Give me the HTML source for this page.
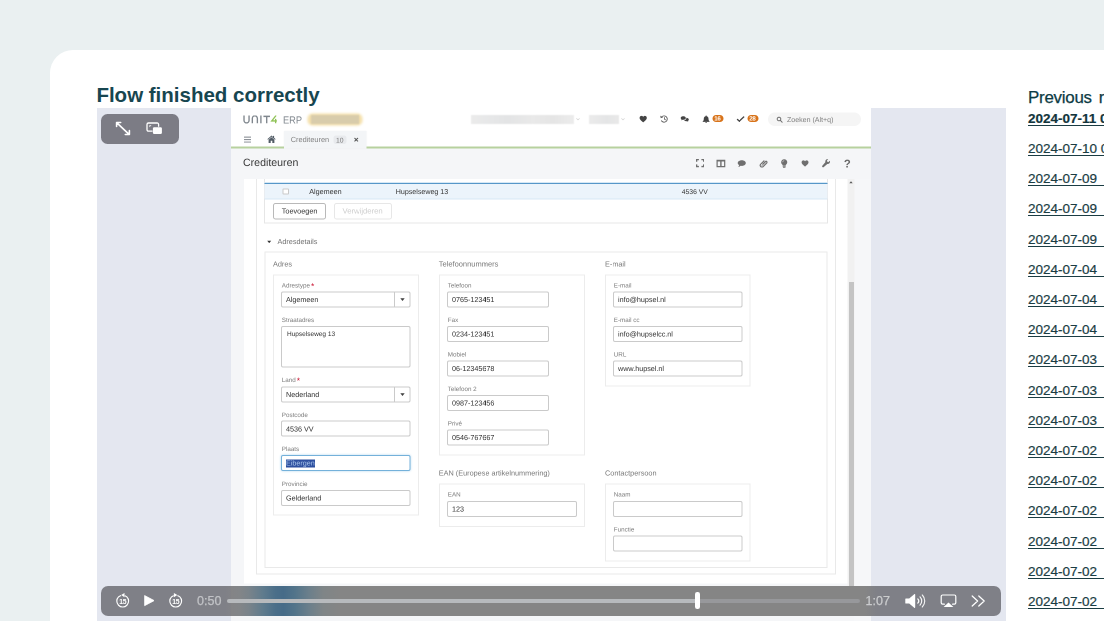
<!DOCTYPE html>
<html>
<head>
<meta charset="utf-8">
<title>Flow finished correctly</title>
<style>
*{box-sizing:border-box;margin:0;padding:0}
html,body{width:1104px;height:621px;overflow:hidden}
body{background:#eaf0f1;font-family:"Liberation Sans",sans-serif;position:relative}
.abs{position:absolute}
#card{position:absolute;left:50px;top:50px;width:1100px;height:600px;background:#fff;border-top-left-radius:23px}
#h1{position:absolute;left:96.400px;top:82.200px;font-size:20.500px;font-weight:bold;color:#174650;white-space:nowrap;line-height:26px;letter-spacing:0}
#vidbg{position:absolute;left:96.5px;top:108.400px;width:909px;height:520px;background:#e4e7f0}
#vid{position:absolute;left:231px;top:108px;width:640px;height:513px;overflow:hidden;background:#fff}
#v2{text-rendering:geometricPrecision;position:absolute;left:0;top:0;width:1280px;height:1026px;transform:scale(.5);transform-origin:0 0;will-change:transform;font-family:"Liberation Sans",sans-serif;color:#3a3a3a;background:#f5f6f8}
#v2 .a{position:absolute;white-space:nowrap}
/* side list */
#side{position:absolute;left:1028px;top:0;width:120px;color:#12343b;white-space:nowrap}
#side .t{position:absolute;left:0;top:86.600px;font-size:16.900px;letter-spacing:-.25px;word-spacing:2.600px;line-height:22px;color:#0d3b44;-webkit-text-stroke:.25px #0d3b44}
#side a{position:absolute;left:0;font-size:13.5px;line-height:18px;color:#1a3c43;text-decoration:underline;text-underline-offset:2px;text-decoration-thickness:1px;-webkit-text-stroke:.2px #1a3c43}
</style>
</head>
<body>
<div id="card"></div>
<div id="h1">Flow finished correctly</div>
<div id="vidbg"></div>
<div id="vid"><div id="v2">
<div class="a" style="left:0px;top:0px;width:1280px;height:78px;background:#fff"></div>
<svg class="a" preserveAspectRatio="none" style="left:24.4px;top:15.2px;" width="68.6" height="15.6" viewBox="0 0 68 15.2"><g fill="none" stroke="#7f868d" stroke-width="2.7" stroke-linecap="butt"><path d="M2 0v9.5a5 5 0 0 0 10 0V0"/><path d="M18.5 15.2V5.7a5 5 0 0 1 10 0v9.5"/><path d="M35.5 0v15.2"/><path d="M40.5 1.7h13M47 1.7v13.5"/></g><path d="M65.5 0 57 10.6h10.2M64.7 6.5v8.7" fill="none" stroke="#8fc256" stroke-width="2.6"/></svg>
<div class="a" style="left:103.8px;top:12.1px;font-size:20.6px;line-height:25px;color:#7f868d;transform:scaleX(.9);transform-origin:0 50%">ERP</div>
<div class="a" style="left:153.0px;top:11.2px;width:110.0px;height:23.6px;background:#f3dca2;border-radius:10px;filter:blur(2.5px);opacity:.9"></div>
<div class="a" style="left:160px;top:14.4px;width:96px;height:17.2px;background:#d8ccab;filter:blur(1.6px)"></div>
<div class="a" style="left:480px;top:14px;width:206px;height:18px;background:linear-gradient(90deg,#ebebeb,#e6e7e8 20%,#e3e4e5 35%,#e9e9e9 60%,#e5e5e5 80%,#ececec);filter:blur(1px)"></div>
<div class="a" style="left:716px;top:14px;width:60px;height:18px;background:linear-gradient(90deg,#ebebeb,#e4e5e6 60%,#e9e9e9);filter:blur(1px)"></div>
<svg class="a"  style="left:690.2px;top:20.2px;" width="8.0" height="4.6" viewBox="0 0 8 4.600"><path d="M.8.800 4 3.800 7.200.8" fill="none" stroke="#d2d2d2" stroke-width="1.400"/></svg>
<svg class="a"  style="left:780.2px;top:20.2px;" width="8.0" height="4.6" viewBox="0 0 8 4.600"><path d="M.8.800 4 3.800 7.200.8" fill="none" stroke="#d2d2d2" stroke-width="1.400"/></svg>
<svg class="a"  style="left:816.2px;top:14.8px;" width="16.8" height="14.6" viewBox="0 0 16 15"><path d="M8 14.2C3.6 10.4.6 8 .6 4.8.6 2.4 2.4.8 4.6.8 6 .8 7.2 1.5 8 2.7 8.8 1.5 10 .8 11.4.8c2.2 0 4 1.6 4 4 0 3.200-3 5.600-7.400 9.400z" fill="#444"/></svg>
<svg class="a"  style="left:858px;top:14.2px;" width="16.8" height="15.4" viewBox="0 0 16.800 15.400"><path d="M3.2 4.2A6.300 6.300 0 1 1 2.600 11" fill="none" stroke="#555" stroke-width="1.700"/><path d="M.6 1.200 1.400 6.200 6.200 5z" fill="#555"/><path d="M9 4.400V8.400l2.600 1.800" fill="none" stroke="#555" stroke-width="1.600"/></svg>
<svg class="a"  style="left:899.2px;top:15.6px;" width="17.0" height="11.4" viewBox="0 0 17 11.400"><path d="M5.500.4C2.700.4.4 2 .4 4c0 1.100.7 2.100 1.800 2.800L1.400 8.800l2.700-1.300c.5.100.9.100 1.400.1 2.800 0 5.100-1.600 5.100-3.600S8.300.4 5.500.4z" fill="#444"/><path d="M11.800 3.600c2.700.2 4.800 1.700 4.800 3.600 0 1-.6 1.900-1.600 2.600l.7 1.700-2.500-1.100c-.5.100-1 .1-1.400.1-2 0-3.800-.8-4.600-2 3.200-.3 4.800-2.400 4.600-4.900z" fill="#444"/></svg>
<svg class="a"  style="left:942.8px;top:14.6px;" width="14.6" height="15.2" viewBox="0 0 14.600 15.200"><path d="M7.300 0c.6 0 1 .4 1 1v.5c2.300.5 3.700 2.400 3.700 4.800 0 3.500 1 4.500 2.200 5.500v1H.4v-1c1.200-1 2.200-2 2.200-5.500 0-2.400 1.400-4.300 3.700-4.800V1c0-.6.400-1 1-1z" fill="#444"/><path d="M5.600 13.600h3.400a1.700 1.700 0 0 1-3.400 0z" fill="#444"/></svg>
<div class="a" style="left:963.2px;top:14px;width:21.4px;height:14.4px;background:#d8731a;border-radius:8px"></div>
<div class="a" style="left:966.4px;top:14.3px;font-size:12.2px;line-height:15px;color:#fff;font-weight:bold;letter-spacing:-.5px">16</div>
<svg class="a"  style="left:1010.8px;top:16.2px;" width="16.4" height="11.4" viewBox="0 0 16.400 11.400"><path d="M1.200 6.200 5.600 10.200 15.200 1.200" fill="none" stroke="#444" stroke-width="2.700"/></svg>
<div class="a" style="left:1033.2px;top:14px;width:21.6px;height:14.4px;background:#d8731a;border-radius:8px"></div>
<div class="a" style="left:1036.6px;top:14.3px;font-size:12.2px;line-height:15px;color:#fff;font-weight:bold;letter-spacing:-.5px">28</div>
<div class="a" style="left:1074px;top:9.0px;width:186px;height:27.0px;background:#f5f5f5;border-radius:14px"></div>
<svg class="a"  style="left:1090.6px;top:16.8px;" width="12.4" height="12.8" viewBox="0 0 12.4 12.8"><circle cx="5" cy="5" r="3.6" fill="none" stroke="#6e6e6e" stroke-width="2"/><path d="M7.8 7.8 11.4 11.6" stroke="#6e6e6e" stroke-width="2" stroke-linecap="round"/></svg>
<div class="a" style="left:1112px;top:14.5px;font-size:14.1px;line-height:17px;color:#7e7e7e;">Zoeken (Alt+q)</div>
<svg class="a"  style="left:25.8px;top:56.8px;" width="14.2" height="12.4" viewBox="0 0 14.2 12.4"><path d="M0 1.2h14.2M0 6.2h14.2M0 11.2h14.2" stroke="#7d838a" stroke-width="2"/></svg>
<svg class="a"  style="left:71.8px;top:54.2px;" width="18.0" height="16.0" viewBox="0 0 18 16"><path d="M9 1 .8 8.2l1.1 1.3L9 3.4l7.1 6.1 1.1-1.3-3-2.6V1.8h-2.2v1.9z" fill="#525c66"/><path d="M9 4.6 3.2 9.6V16h4.2v-4.4h3.2V16h4.2V9.6z" fill="#525c66"/></svg>
<div class="a" style="left:106px;top:46px;width:164.6px;height:35.2px;background:#f3f5f7;box-shadow:0 0 3px rgba(0,0,0,.06)"></div>
<div class="a" style="left:119.5px;top:55.4px;font-size:14.7px;line-height:18px;color:#808080;">Crediteuren</div>
<div class="a" style="left:205.2px;top:54.6px;width:25.6px;height:17.4px;background:#e8eaed;border-radius:5px"></div>
<div class="a" style="left:210px;top:56.6px;font-size:13.6px;line-height:16px;color:#7a7a7a;">10</div>
<svg class="a"  style="left:246px;top:58.8px;" width="8.8" height="8.8" viewBox="0 0 8.8 8.8"><path d="M1 1l6.8 6.8M7.8 1 1 7.8" stroke="#555" stroke-width="2"/></svg>
<div class="a" style="left:0px;top:77.4px;width:106px;height:3.6px;background:#b7d19e"></div>
<div class="a" style="left:270.6px;top:77.4px;width:1009.4px;height:3.6px;background:#b7d19e"></div>
<div class="a" style="left:24px;top:97.1px;font-size:21.2px;line-height:25px;color:#383838;">Crediteuren</div>
<svg class="a"  style="left:929.8px;top:102.4px;" width="16.6" height="16.4" viewBox="0 0 16.600 16.400"><path d="M1.300 5.600V1.300h4.500M10.800 1.300h4.500v4.300M15.300 10.800v4.300h-4.500M5.800 15.100H1.300v-4.300" fill="none" stroke="#6f6f6f" stroke-width="2.600"/></svg>
<svg class="a"  style="left:971.2px;top:103.4px;" width="17.6" height="15.4" viewBox="0 0 17.600 15.400"><path d="M1.200 1.800h15.200v12.400H1.200z" fill="none" stroke="#6f6f6f" stroke-width="2.400"/><path d="M1.200 2.600h15.200M8.800 2v12" stroke="#6f6f6f" stroke-width="2.800" fill="none"/></svg>
<svg class="a"  style="left:1013.4px;top:104px;" width="17.0" height="14" viewBox="0 0 17 14"><path d="M8.500.4C4 .4.4 2.900.4 6c0 1.700 1.100 3.200 2.800 4.200-.2 1.300-1 2.600-2.200 3.400 2.200 0 4-.9 5.200-2 .700.100 1.500.2 2.300.2 4.500 0 8.100-2.500 8.100-5.800S13 .4 8.500.4z" fill="#6f6f6f"/></svg>
<svg class="a"  style="left:1055.6px;top:103.0px;" width="17.0" height="16.2" viewBox="0 0 17 16.200"><path d="M6.200 8.800l5.400-5.400a1.900 1.900 0 0 1 2.700 2.700l-7.400 7.400a3.400 3.400 0 0 1-4.800-4.800l7.400-7.400" fill="none" stroke="#6f6f6f" stroke-width="2.300" transform="translate(1.200 .8)"/><path d="M4.200 11.800 11.800 4.200" stroke="#6f6f6f" stroke-width="1.500" transform="translate(1.200 .8)"/></svg>
<svg class="a"  style="left:1099.8px;top:101.8px;" width="12.8" height="18.0" viewBox="0 0 12.800 18"><path d="M6.400.4a6 6 0 0 0-4 10.500c.7.600 1 1.300 1 2.100h6c0-.8.300-1.500 1-2.100A6 6 0 0 0 6.400.4z" fill="#6f6f6f"/><path d="M3.300 14.400h6.200M3.900 16.700h5" stroke="#6f6f6f" stroke-width="1.800"/><path d="M3.400 6.400a3 3 0 0 1 3-3" fill="none" stroke="#f5f6f8" stroke-width="1"/></svg>
<svg class="a"  style="left:1140.4px;top:104px;" width="16.2" height="14" viewBox="0 0 16 15"><path d="M8 14.2C3.6 10.4.6 8 .6 4.8.6 2.4 2.4.8 4.6.8 6 .8 7.2 1.5 8 2.7 8.8 1.5 10 .8 11.4.8c2.2 0 4 1.6 4 4 0 3.200-3 5.600-7.400 9.400z" fill="#6f6f6f"/></svg>
<svg class="a"  style="left:1182.2px;top:102.4px;" width="16.0" height="16.8" viewBox="0 0 16 16.800"><path d="M15.400 3.600 12.800 6.200 10.600 5.400 9.800 3.200 12.400.6A4.400 4.400 0 0 0 6.800 6.200L.8 13.200a1.900 1.900 0 0 0 2.800 2.800l7-6a4.400 4.400 0 0 0 4.800-6.400z" fill="#6f6f6f"/></svg>
<div class="a" style="left:1225.8px;top:97.9px;font-size:22.5px;line-height:27px;color:#686868;font-weight:bold">?</div>
<div class="a" style="left:26px;top:142px;width:1207.0px;height:808.6px;background:#fff"></div>
<div class="a" style="left:1233.0px;top:142px;width:14.0px;height:822px;background:#f1f1f1"></div>
<div class="a" style="left:1247.0px;top:142px;width:33.0px;height:884px;background:#f6f7f9"></div>
<div class="a" style="left:1235.6px;top:348px;width:10.0px;height:636px;background:#c4c4c4"></div>
<svg class="a"  style="left:1236px;top:146.4px;" width="8" height="5.2" viewBox="0 0 8 5.2"><path d="M4 .4 7.4 4.6H.6z" fill="#555"/></svg>
<div class="a" style="left:50px;top:142px;width:1160px;height:791.4px;border:2px solid #e9e9e9;border-top:none"></div>
<div class="a" style="left:66px;top:142px;width:1128px;height:88.8px;border:2px solid #e6e6e6;border-top:none"></div>
<div class="a" style="left:67.0px;top:147.8px;width:1126.0px;height:1.8px;background:#d6e8f5"></div>
<div class="a" style="left:67.0px;top:149.6px;width:1126.0px;height:2.6px;background:#5697c8"></div>
<div class="a" style="left:67.0px;top:152.4px;width:1126.0px;height:30.8px;background:#ecf4fb;border-bottom:2px solid #d6e7f4"></div>
<div class="a" style="left:103.0px;top:160.8px;width:12.8px;height:12.6px;background:#fff;border:2px solid #c9c9c9;border-radius:2px"></div>
<div class="a" style="left:156.5px;top:159.9px;font-size:14.4px;line-height:17px;color:#333;">Algemeen</div>
<div class="a" style="left:329.5px;top:159.9px;font-size:14.2px;line-height:17px;color:#333;">Hupselseweg 13</div>
<div class="a" style="left:901.5px;top:160.4px;font-size:13.6px;line-height:16px;color:#333;">4536 VV</div>
<div class="a" style="left:84px;top:190px;width:106px;height:33.2px;border:2px solid #b9b9b9;border-radius:5px;background:#fff"></div>
<div class="a" style="left:101.5px;top:198.4px;font-size:14.6px;line-height:18px;color:#333;">Toevoegen</div>
<div class="a" style="left:206px;top:190px;width:115.6px;height:33.2px;border:2px solid #e7e7e7;border-radius:5px;background:#fff"></div>
<div class="a" style="left:223.0px;top:198.4px;font-size:15.4px;line-height:18px;color:#cdcdcd;">Verwijderen</div>
<svg class="a"  style="left:72px;top:264.6px;" width="8.8" height="5.8" viewBox="0 0 8 5.2"><path d="M.4.4h7.2L4 4.8z" fill="#333"/></svg>
<div class="a" style="left:93.0px;top:260.3px;font-size:14.5px;line-height:17px;color:#6f6f6f;">Adresdetails</div>
<div class="a" style="left:67.0px;top:287.2px;width:1126.0px;height:632.8px;border:2px solid #e9e9e9;background:#fff"></div>
<div class="a" style="left:84px;top:304.2px;font-size:14.6px;line-height:18px;color:#777;">Adres</div>
<div class="a" style="left:415.5px;top:304.2px;font-size:15px;line-height:18px;color:#777;">Telefoonnummers</div>
<div class="a" style="left:748px;top:304.2px;font-size:14.6px;line-height:18px;color:#777;">E-mail</div>
<div class="a" style="left:415.5px;top:722.2px;font-size:14.6px;line-height:18px;color:#777;">EAN (Europese artikelnummering)</div>
<div class="a" style="left:748px;top:722.2px;font-size:14.6px;line-height:18px;color:#777;">Contactpersoon</div>
<div class="a" style="left:84px;top:333.0px;width:291.5px;height:482.2px;border:2px solid #ececec"></div>
<div class="a" style="left:415.5px;top:333.0px;width:292.5px;height:362.0px;border:2px solid #ececec"></div>
<div class="a" style="left:748px;top:333.0px;width:291.0px;height:223.6px;border:2px solid #ececec"></div>
<div class="a" style="left:415.5px;top:751.0px;width:292.5px;height:86.6px;border:2px solid #ececec"></div>
<div class="a" style="left:748px;top:751.0px;width:291.0px;height:156.0px;border:2px solid #ececec"></div>
<div class="a" style="left:101.6px;top:347.7px;font-size:12.5px;line-height:15px;color:#7b7b7b;">Adrestype<span style="color:#c8102e;font-size:17px;line-height:10px;position:relative;top:3px;left:2px">*</span></div>
<div class="a" style="left:100px;top:366.7px;width:259.0px;height:32.0px;border:2px solid #cacaca;border-radius:4px;background:#fff;"></div>
<div class="a" style="left:110px;top:376.1px;font-size:14.4px;line-height:17px;color:#303030;">Algemeen</div>
<div class="a" style="left:326.4px;top:368.0px;width:1.4px;height:29.0px;background:#cacaca"></div>
<svg class="a"  style="left:338px;top:380.0px;" width="10" height="6.4" viewBox="0 0 10 6.400"><path d="M.6.500h8.800L5 5.900z" fill="#3e3e3e"/></svg>
<div class="a" style="left:101.6px;top:416.7px;font-size:12.5px;line-height:15px;color:#7b7b7b;">Straatadres</div>
<div class="a" style="left:100px;top:435.7px;width:259.0px;height:83.0px;border:2px solid #cacaca;border-radius:4px;background:#fff;"></div>
<div class="a" style="left:112px;top:443.8px;font-size:13.0px;line-height:16px;color:#303030;">Hupselseweg 13</div>
<div class="a" style="left:101.6px;top:537.3px;font-size:12.5px;line-height:15px;color:#7b7b7b;">Land<span style="color:#c8102e;font-size:17px;line-height:10px;position:relative;top:3px;left:2px">*</span></div>
<div class="a" style="left:100px;top:556.9px;width:259.0px;height:32.0px;border:2px solid #cacaca;border-radius:4px;background:#fff;"></div>
<div class="a" style="left:110px;top:566.3px;font-size:14.4px;line-height:17px;color:#303030;">Nederland</div>
<div class="a" style="left:326.4px;top:558.2px;width:1.4px;height:29.0px;background:#cacaca"></div>
<svg class="a"  style="left:338px;top:570.2px;" width="10" height="6.4" viewBox="0 0 10 6.400"><path d="M.6.500h8.800L5 5.900z" fill="#3e3e3e"/></svg>
<div class="a" style="left:101.6px;top:606.5px;font-size:12.5px;line-height:15px;color:#7b7b7b;">Postcode</div>
<div class="a" style="left:100px;top:625.3px;width:259.0px;height:32.0px;border:2px solid #cacaca;border-radius:4px;background:#fff;"></div>
<div class="a" style="left:110px;top:634.7px;font-size:14.4px;line-height:17px;color:#303030;">4536 VV</div>
<div class="a" style="left:101.6px;top:675.1px;font-size:12.5px;line-height:15px;color:#7b7b7b;">Plaats</div>
<div class="a" style="left:100px;top:694.3px;width:259.0px;height:32.0px;border:2px solid #cacaca;border-radius:4px;background:#fff;border-color:#74b1da;box-shadow:0 0 5px #b5d6ee"></div>
<div class="a" style="left:109.6px;top:702.8px;width:58.0px;height:16.4px;background:#2d4f9f"></div>
<div class="a" style="left:110px;top:702.9px;font-size:14.4px;line-height:17px;color:#a8c4ea;">Eibergen</div>
<div class="a" style="left:101.6px;top:744.9px;font-size:12.5px;line-height:15px;color:#7b7b7b;">Provincie</div>
<div class="a" style="left:100px;top:763.7px;width:259.0px;height:32.0px;border:2px solid #cacaca;border-radius:4px;background:#fff;"></div>
<div class="a" style="left:110px;top:773.1px;font-size:14.4px;line-height:17px;color:#303030;">Gelderland</div>
<div class="a" style="left:433.6px;top:347.7px;font-size:12.5px;line-height:15px;color:#7b7b7b;">Telefoon</div>
<div class="a" style="left:432px;top:366.7px;width:203.5px;height:32.0px;border:2px solid #cacaca;border-radius:4px;background:#fff;"></div>
<div class="a" style="left:442px;top:376.1px;font-size:14.4px;line-height:17px;color:#303030;">0765-123451</div>
<div class="a" style="left:433.6px;top:416.7px;font-size:12.5px;line-height:15px;color:#7b7b7b;">Fax</div>
<div class="a" style="left:432px;top:435.7px;width:203.5px;height:32.0px;border:2px solid #cacaca;border-radius:4px;background:#fff;"></div>
<div class="a" style="left:442px;top:445.1px;font-size:14.4px;line-height:17px;color:#303030;">0234-123451</div>
<div class="a" style="left:433.6px;top:485.7px;font-size:12.5px;line-height:15px;color:#7b7b7b;">Mobiel</div>
<div class="a" style="left:432px;top:504.7px;width:203.5px;height:32.0px;border:2px solid #cacaca;border-radius:4px;background:#fff;"></div>
<div class="a" style="left:442px;top:514.1px;font-size:14.4px;line-height:17px;color:#303030;">06-12345678</div>
<div class="a" style="left:433.6px;top:554.7px;font-size:12.5px;line-height:15px;color:#7b7b7b;">Telefoon 2</div>
<div class="a" style="left:432px;top:573.7px;width:203.5px;height:32.0px;border:2px solid #cacaca;border-radius:4px;background:#fff;"></div>
<div class="a" style="left:442px;top:583.1px;font-size:14.4px;line-height:17px;color:#303030;">0987-123456</div>
<div class="a" style="left:433.6px;top:623.7px;font-size:12.5px;line-height:15px;color:#7b7b7b;">Priv&eacute;</div>
<div class="a" style="left:432px;top:642.7px;width:203.5px;height:32.0px;border:2px solid #cacaca;border-radius:4px;background:#fff;"></div>
<div class="a" style="left:442px;top:652.1px;font-size:14.4px;line-height:17px;color:#303030;">0546-767667</div>
<div class="a" style="left:765.6px;top:347.7px;font-size:12.5px;line-height:15px;color:#7b7b7b;">E-mail</div>
<div class="a" style="left:764px;top:366.7px;width:259.0px;height:32.0px;border:2px solid #cacaca;border-radius:4px;background:#fff;"></div>
<div class="a" style="left:774px;top:376.1px;font-size:14.4px;line-height:17px;color:#303030;">info@hupsel.nl</div>
<div class="a" style="left:765.6px;top:416.7px;font-size:12.5px;line-height:15px;color:#7b7b7b;">E-mail cc</div>
<div class="a" style="left:764px;top:435.7px;width:259.0px;height:32.0px;border:2px solid #cacaca;border-radius:4px;background:#fff;"></div>
<div class="a" style="left:774px;top:445.1px;font-size:14.4px;line-height:17px;color:#303030;">info@hupselcc.nl</div>
<div class="a" style="left:765.6px;top:485.7px;font-size:12.5px;line-height:15px;color:#7b7b7b;">URL</div>
<div class="a" style="left:764px;top:504.7px;width:259.0px;height:32.0px;border:2px solid #cacaca;border-radius:4px;background:#fff;"></div>
<div class="a" style="left:774px;top:514.1px;font-size:14.4px;line-height:17px;color:#303030;">www.hupsel.nl</div>
<div class="a" style="left:433.6px;top:766.3px;font-size:12.5px;line-height:15px;color:#7b7b7b;">EAN</div>
<div class="a" style="left:432px;top:785.7px;width:259.5px;height:32.0px;border:2px solid #cacaca;border-radius:4px;background:#fff;"></div>
<div class="a" style="left:442px;top:795.1px;font-size:14.4px;line-height:17px;color:#303030;">123</div>
<div class="a" style="left:765.6px;top:766.3px;font-size:12.5px;line-height:15px;color:#7b7b7b;">Naam</div>
<div class="a" style="left:764px;top:785.7px;width:259.0px;height:32.0px;border:2px solid #cacaca;border-radius:4px;background:#fff;"></div>
<div class="a" style="left:765.6px;top:835.5px;font-size:12.5px;line-height:15px;color:#7b7b7b;">Functie</div>
<div class="a" style="left:764px;top:854.7px;width:259.0px;height:32.0px;border:2px solid #cacaca;border-radius:4px;background:#fff;"></div>
</div></div>
<!-- top-left pill -->
<div class="abs" style="left:101.200px;top:114px;width:77.500px;height:29.500px;border-radius:6.500px;background:rgba(108,108,117,.87)"></div>
<svg class="abs" style="left:114.900px;top:121px" width="16" height="15" viewBox="0 0 16 15"><g fill="none" stroke="#fff" stroke-width="1.600" stroke-linecap="round" stroke-linejoin="round"><path d="M1.600 5.400V1.500h4.100M1.900 1.800 14.100 13.300M14.400 9.600v3.900h-4.100"/></g></svg>
<svg class="abs" style="left:146px;top:122.300px" width="17" height="13" viewBox="0 0 17 13"><path d="M6.600 9.200H2.400A1.400 1.400 0 0 1 1 7.800V2.400A1.400 1.400 0 0 1 2.400 1h8.800a1.400 1.400 0 0 1 1.400 1.400v2.300" fill="none" stroke="#fff" stroke-width="1.300"/><rect x="6.900" y="5.300" width="9" height="6.800" rx="1.300" fill="#fff"/><path d="M3.400 3.200h2.100L3.400 5.300z" fill="#fff"/></svg>
<!-- control bar -->
<div class="abs" style="left:101.250px;top:586.300px;width:899.250px;height:29.300px;border-radius:7px;overflow:hidden">
 <div class="abs" style="left:0;top:0;width:136px;height:100%;background:linear-gradient(90deg,#7f8087 0,#7f8087 124px,#848486 136px)"></div>
 <div class="abs" style="left:129.750px;top:0;width:640px;height:100%;background:linear-gradient(90deg,#848486 0,#828588 1.400%,#79838a 2.800%,#5f7b8d 5%,#4a6e89 7%,#466b88 8.200%,#52748a 10%,#6b7f8b 12.200%,#7f8587 14.400%,#858585 17%,#858585 100%)"></div>
 <div class="abs" style="left:763.750px;top:0;width:136px;height:100%;background:linear-gradient(90deg,#858585 0,#7f8087 12px,#7f8087 100%)"></div>
</div>
<!-- track -->
<div class="abs" style="left:227px;top:598.800px;width:633px;height:4.200px;border-radius:2.100px;background:#97989b"></div>
<div class="abs" style="left:227px;top:598.800px;width:470px;height:4.200px;border-radius:2.100px;background:rgba(205,208,212,.6)"></div>
<div class="abs" style="left:695.200px;top:592.300px;width:4.400px;height:16.800px;border-radius:2.200px;background:#fff"></div>
<!-- back 15 -->
<svg class="abs" style="left:115px;top:592px" width="16" height="17" viewBox="0 0 16 17"><circle cx="7.700" cy="9.100" r="5.900" fill="none" stroke="#fff" stroke-width="1.150"/><path d="M6 3.200h3.700" stroke="#7f8087" stroke-width="2.200"/><path d="M9.500.900v4.400L6.100 3.100z" fill="#fff"/><text x="7.700" y="11.500" font-family="Liberation Sans" font-size="6.800" font-weight="bold" fill="#fff" text-anchor="middle" letter-spacing="-.3">15</text></svg>
<!-- play -->
<svg class="abs" style="left:143.600px;top:595.400px" width="10.800" height="11.200" viewBox="0 0 11.500 12"><path d="M.6.600 10.900 6 .6 11.400z" fill="#fff" stroke="#fff" stroke-width=".8" stroke-linejoin="round"/></svg>
<!-- fwd 15 -->
<svg class="abs" style="left:167.700px;top:592px" width="16" height="17" viewBox="0 0 16 17"><circle cx="7.700" cy="9.100" r="5.900" fill="none" stroke="#fff" stroke-width="1.150"/><path d="M5.700 3.200h3.700" stroke="#7f8087" stroke-width="2.200"/><path d="M5.900.900v4.400l3.400-2.200z" fill="#fff"/><text x="7.700" y="11.500" font-family="Liberation Sans" font-size="6.800" font-weight="bold" fill="#fff" text-anchor="middle" letter-spacing="-.3">15</text></svg>
<div class="abs" style="left:197px;top:593.500px;font-size:12.500px;line-height:15px;color:#c2c3c7;-webkit-text-stroke:.25px #c2c3c7;white-space:nowrap">0:50</div>
<div class="abs" style="left:865.500px;top:593.900px;font-size:12.500px;line-height:15px;color:#cbccce;-webkit-text-stroke:.25px #cbccce;white-space:nowrap">1:07</div>
<!-- volume -->
<svg class="abs" style="left:905px;top:593px" width="21" height="16" viewBox="0 0 21 16"><path d="M.8 5.400h3.400L9.200 1.200a.6.600 0 0 1 1 .5v12.600a.6.600 0 0 1-1 .5L4.200 10.600H.8a.5.500 0 0 1-.5-.5V5.900a.5.500 0 0 1 .5-.5z" fill="#fff"/><g fill="none" stroke="#fff" stroke-width="1.150" stroke-linecap="round"><path d="M12.800 5.800a3.200 3.200 0 0 1 0 4.400"/><path d="M15 3.800a6 6 0 0 1 0 8.400" opacity=".95"/><path d="M17.300 2a8.600 8.600 0 0 1 0 12" opacity=".9"/></g></svg>
<!-- airplay -->
<svg class="abs" style="left:940px;top:594px" width="17" height="14" viewBox="0 0 17 14"><path d="M4.400 10.200H2.600A1.400 1.400 0 0 1 1.200 8.800V2.400A1.400 1.400 0 0 1 2.600 1h11.800a1.400 1.400 0 0 1 1.400 1.400v6.400a1.400 1.400 0 0 1-1.400 1.400h-1.800" fill="none" stroke="#fff" stroke-width="1.200" stroke-linecap="round"/><path d="M8.500 8.400l4.900 4.600H3.600z" fill="#fff"/></svg>
<!-- >> -->
<svg class="abs" style="left:971px;top:595px" width="15" height="12" viewBox="0 0 15 12"><path d="M1.200 1 6.600 6 1.200 11M7.800 1l5.400 5-5.400 5" fill="none" stroke="#fff" stroke-width="1.250" stroke-linecap="round" stroke-linejoin="round"/></svg>

<div id="side">
<div class="t">Previous runs</div>
<a style="top:109.90px;font-weight:bold;color:#12343b">2024-07-11 09:12</a>
<a style="top:140.09px">2024-07-10 09:11</a>
<a style="top:170.28px">2024-07-09&nbsp;&nbsp;15:42</a>
<a style="top:200.47px">2024-07-09&nbsp;&nbsp;11:03</a>
<a style="top:230.66px">2024-07-09&nbsp;&nbsp;09:10</a>
<a style="top:260.85px">2024-07-04&nbsp;&nbsp;16:20</a>
<a style="top:291.04px">2024-07-04&nbsp;&nbsp;13:48</a>
<a style="top:321.23px">2024-07-04&nbsp;&nbsp;09:12</a>
<a style="top:351.42px">2024-07-03&nbsp;&nbsp;15:31</a>
<a style="top:381.61px">2024-07-03&nbsp;&nbsp;12:02</a>
<a style="top:411.80px">2024-07-03&nbsp;&nbsp;09:11</a>
<a style="top:441.99px">2024-07-02&nbsp;&nbsp;17:40</a>
<a style="top:472.18px">2024-07-02&nbsp;&nbsp;16:55</a>
<a style="top:502.37px">2024-07-02&nbsp;&nbsp;15:13</a>
<a style="top:532.56px">2024-07-02&nbsp;&nbsp;13:27</a>
<a style="top:562.75px">2024-07-02&nbsp;&nbsp;11:48</a>
<a style="top:592.94px">2024-07-02&nbsp;&nbsp;09:10</a>
</div>
</body>
</html>
